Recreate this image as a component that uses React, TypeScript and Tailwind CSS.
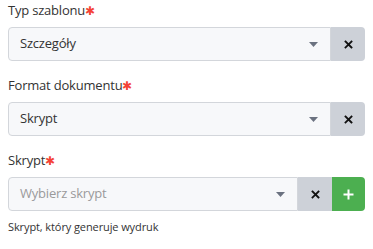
const Caret = () => (
  <svg width="9" height="5" viewBox="0 0 9 5" className="text-[#6b7280]">
    <path d="M0 0h9L4.5 5z" fill="currentColor" />
  </svg>
);

const Cross = () => (
  <svg width="9" height="9" viewBox="0 0 9 9">
    <path d="M1.5 1.5l6 6M7.5 1.5l-6 6" stroke="#111" strokeWidth="1.8" strokeLinecap="square" />
  </svg>
);

const Plus = () => (
  <svg width="11" height="11" viewBox="0 0 11 11">
    <path d="M5.5 0.5v10M0.5 5.5h10" stroke="#fff" strokeWidth="2" />
  </svg>
);

function Field({
  label,
  value,
  placeholder,
  addButton,
}: {
  label: string;
  value?: string;
  placeholder?: string;
  addButton?: boolean;
}) {
  return (
    <div className="flex flex-col">
      <div className="h-5 text-[13px] leading-5 tracking-[-0.2px] text-[#333]">
        {label}
        <span className="text-[12px] text-[#f44336]">✱</span>
      </div>
      <div className="mt-[7px] flex h-[34px]">
        <div className="flex flex-1 items-center rounded-l border border-[#d3d6db] bg-[#f7f8fa] pl-[11px] pr-[12px]">
          <span
            className={
              value
                ? "flex-1 text-[13px] tracking-[-0.2px] text-[#333]"
                : "flex-1 text-[13px] tracking-[-0.2px] text-[#9a9a9a]"
            }
          >
            {value ?? placeholder}
          </span>
          <Caret />
        </div>
        <button
          className={
            addButton
              ? "flex w-[34px] items-center justify-center bg-[#cdd1d8]"
              : "flex w-[34px] items-center justify-center rounded-r bg-[#cdd1d8]"
          }
        >
          <Cross />
        </button>
        {addButton && (
          <button className="flex w-[33px] items-center justify-center rounded-r bg-[#4caf50]">
            <Plus />
          </button>
        )}
      </div>
    </div>
  );
}

export default function App() {
  return (
    <div
      className="flex w-[373px] flex-col gap-[14px] bg-white px-2 pt-0"
      style={{ fontFamily: '"Open Sans", "Noto Sans", sans-serif' }}
    >
      <Field label="Typ szablonu" value="Szczegóły" />
      <Field label="Format dokumentu" value="Skrypt" />
      <div>
        <Field label="Skrypt" placeholder="Wybierz skrypt" addButton />
        <div className="mt-2 text-[11px] leading-4 tracking-[-0.1px] text-[#333]">Skrypt, który generuje wydruk</div>
      </div>
    </div>
  );
}
